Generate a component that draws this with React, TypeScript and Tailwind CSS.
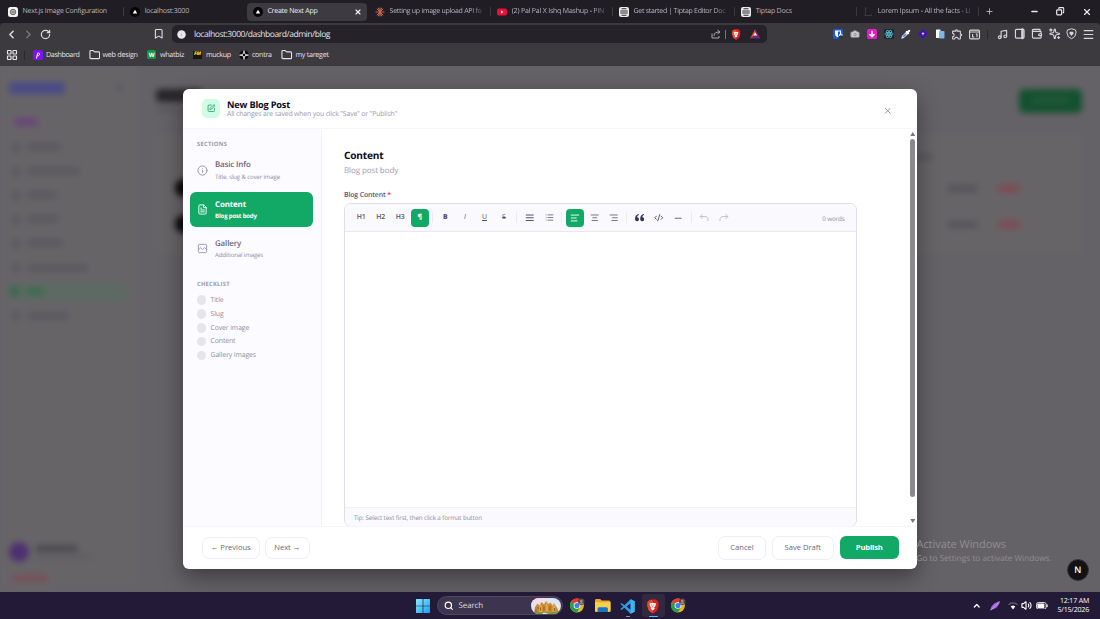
// src/App.tsx

import type { ReactNode } from 'react';
import {
  Bookmark,
  Camera,
  ChevronLeft,
  ChevronRight,
  ChevronUp,
  CodeXml,
  Copy,
  FileText,
  Folder,
  Info,
  LayoutGrid,
  List,
  Menu,
  Minus,
  Music,
  PanelRight,
  Plus,
  RotateCw,
  Search,
  Sparkles,
  SquarePen,
  TextAlignCenter,
  TextAlignEnd,
  TextAlignJustify,
  TextAlignStart,
  Volume2,
  Wallet,
  X
} from 'lucide-react';
import { MdOutlineExtension } from 'react-icons/md';

/* ---------- small drawings ---------- */

const NextMark = () => (
  <svg viewBox="0 0 20 20" className="h-[10px] w-[10px]">
    <circle cx="10" cy="10" r="10" fill="#050505" />
    <path d="M10 5.500 14.500 13h-9z" fill="#fff" />
  </svg>
);

const DocsMark = () => (
  <svg viewBox="0 0 20 20" className="h-[10px] w-[10px]">
    <rect width="20" height="20" rx="4" fill="#ececec" />
    <path d="M5 3.500h10M2.500 8h15M2.500 12h15M5 16.500h10" stroke="#2c2c2c" strokeWidth="2" />
  </svg>
);

const GlobeMark = () => (
  <svg viewBox="0 0 20 20" className="h-[10px] w-[10px]">
    <rect width="20" height="20" rx="5" fill="#f4f4f4" />
    <circle cx="10" cy="10" r="5.500" fill="#b9b9b9" stroke="#6c6c6c" strokeWidth="2" />
    <path d="M7 8.500h6M7 11.500h6" stroke="#666" strokeWidth="1.200" />
  </svg>
);

const BurstMark = () => (
  <svg viewBox="0 0 20 20" className="h-[10px] w-[10px]">
    <path
      d="M10 1v18M1 10h18M3.600 3.600l12.800 12.800M16.400 3.600 3.600 16.400M6.500 1.700l7 16.600M13.500 1.700l-7 16.600"
      stroke="#c9664b"
      strokeWidth="2"
    />
  </svg>
);

const VideoMark = () => (
  <svg viewBox="0 0 20 20" className="h-[10px] w-[10px]">
    <rect y="3" width="20" height="14" rx="4" fill="#ee0f38" />
    <path d="m8 7 5 3-5 3z" fill="#fff" />
  </svg>
);

const LoremMark = () => (
  <svg viewBox="0 0 20 20" className="h-[10px] w-[10px]">
    <path d="M3 2h5M5 2v15M3 17h14v-3" stroke="#45424a" strokeWidth="1.500" fill="none" />
  </svg>
);

const BraveMark = ({ className }: { className: string }) => (
  <svg viewBox="0 0 20 22" className={className}>
    <path d="M5.500 1h9L17 3.500l1.500 1.500-.7 2 .7 2.500L16 17l-6 4.500L4 17 1.500 9.500 2.200 7l-.7-2L3 3.500z" fill="#f4472c" />
    <path d="M10 1h4.500L17 3.500l1.500 1.500-.7 2 .7 2.500L16 17l-6 4.500z" fill="#e21f20" />
    <path d="M5 6.500 10 5.500l5 1-1.500 4.500-1.500 1.500 1 2-3 2.500-3-2.500 1-2L6.500 11z" fill="#fff" />
    <path d="m7.500 8.500 1.500.5M12.500 8.500 11 9M10 9.500v3" stroke="#e8402b" strokeWidth="1.200" />
  </svg>
);

const ChromeMark = () => (
  <svg viewBox="0 0 28 28" className="h-[15px] w-[15px]">
    <circle cx="13" cy="14" r="13" fill="#e3b822" />
    <path d="M13 14 1.700 7.500A13 13 0 0 1 24.300 7.500H13z" fill="#df3b30" />
    <path d="M13 14 1.700 7.500A13 13 0 0 0 13 27l5.600-9.700z" fill="#2b9c4c" />
    <circle cx="13" cy="14" r="6.200" fill="#fff" />
    <circle cx="13" cy="14" r="4.800" fill="#3c83ef" />
    <circle cx="21" cy="7" r="6" fill="#5b4a48" />
    <circle cx="21" cy="5.500" r="2.300" fill="#b78d7c" />
    <path d="M17 11c1-4 7-4 8 0z" fill="#8a8f9e" />
  </svg>
);

const ExplorerMark = () => (
  <svg viewBox="0 0 30 26" className="h-[13.500px] w-[15.500px]">
    <path d="M0 2.500Q0 0 2.500 0H10l3 3h14q3 0 3 3v17q0 3-3 3H3q-3 0-3-3z" fill="#e9a52a" />
    <path d="M0 6h30v15q0 3-3 3H3q-3 0-3-3z" fill="#fbd04e" />
    <path d="M5 26v-7q0-3 3-3h14q3 0 3 3v7z" fill="#1476c5" />
  </svg>
);

const VsCodeMark = () => (
  <svg viewBox="0 0 24 24" className="h-[15px] w-[15px]">
    <path
      d="M17 .5 23.500 3.500v17L17 23.500 7 14l-4.500 3.500L.5 16.300 5 12 .5 7.700l2-1.200L7 10zM17 7l-6.500 5 6.500 5z"
      fill="#2b9be8"
      fillRule="evenodd"
    />
    <path d="m17 .5 6.500 3v17l-6.500 3z" fill="#41b2f5" />
  </svg>
);

const WindowsMark = () => (
  <svg viewBox="0 0 28 28" className="h-[14px] w-[14px]">
    <defs>
      <linearGradient id="win" x1="0" y1="0" x2="1" y2="1">
        <stop offset="0" stopColor="#8be9ff" />
        <stop offset="1" stopColor="#16a0f0" />
      </linearGradient>
    </defs>
    <path
      d="M0 1q0-1 1-1h12.300v13.300H0zM14.700 0H27q1 0 1 1v12.300H14.700zM0 14.700h13.300V28H1q-1 0-1-1zM14.700 14.700H28V27q0 1-1 1H14.700z"
      fill="url(#win)"
    />
  </svg>
);

const CastleArt = () => (
  <svg viewBox="0 0 60 32" className="h-[16px] w-[30px] rounded-full">
    <rect width="60" height="32" fill="#dbe6f3" />
    <path d="M0 0h34l-8 9-26 4z" fill="#f4dcea" />
    <path d="M6 30 8 18l5-7 4 4 4-7 5 5 4-7 5 6 4-3 4 6 4-3 3 5 3 4 2 9z" fill="#c98a35" />
    <path d="m16 17 3-6 3 5v12h-6zM29 15l2-8 3 8v12h-5zM43 14l3-4 3 6v12h-6z" fill="#e3a443" />
    <path d="M10 22v5M14 18v4M19 19v6M26 17v8M38 16v9M47 20v6" stroke="#9a5a2c" strokeWidth="2" />
    <path d="M3 32c4-7 9-5 14-3s10-3 16 0 10-3 15-1 8-4 10-4v8z" fill="#6a9c3d" />
    <path d="M22 32c3-4 8-3 12 0zM50 8l8 5v9l-6-3z" fill="#e4e9ee" />
  </svg>
);

const GalleryIcon = ({ className }: { className?: string }) => (
  <svg viewBox="0 0 24 24" className={className} fill="none" stroke="currentColor" strokeWidth="1.900" strokeLinejoin="round">
    <rect x="3" y="3" width="18" height="18" rx="2" />
    <path d="m3 15 5-4.500 4 4 4.500-4.500L21 14.500M8 7h.5" />
  </svg>
);

/* ---------- browser ---------- */

interface TabItem {
  title: string;
  icon: ReactNode;
  text: string;
  active?: boolean;
  noLine?: boolean;
}

const FADE = '[mask-image:linear-gradient(to_right,black_85%,transparent_104%)]';

const TABS: TabItem[] = [
  { title: 'Next.js Image Configuration', icon: <GlobeMark />, text: 'tracking-[-0.230px]' },
  { title: 'localhost:3000', icon: <NextMark />, text: 'tracking-[-0.210px]', noLine: true },
  { title: 'Create Next App', icon: <NextMark />, text: 'tracking-[-0.220px]', active: true, noLine: true },
  { title: 'Setting up image upload API fo', icon: <BurstMark />, text: `ml-[1px] tracking-[-0.270px] ${FADE}` },
  { title: '(2) Pal Pal X Ishq Mashup - PIN', icon: <VideoMark />, text: `ml-[1px] tracking-[-0.200px] ${FADE}` },
  { title: 'Get started | Tiptap Editor Doc', icon: <DocsMark />, text: `tracking-[-0.280px] ${FADE}` },
  { title: 'Tiptap Docs', icon: <DocsMark />, text: 'tracking-[-0.200px]' },
  { title: 'Lorem Ipsum - All the facts - Li', icon: <LoremMark />, text: `tracking-[-0.180px] ${FADE}` }
];

const TabStrip = () => (
  <div className="flex h-[23px] items-center bg-[#201d25] pl-[2px]">
    {TABS.map((tab) => (
      <div key={tab.title} className="flex h-full w-[122.200px] shrink-0 items-center">
        <div
          className={`flex h-[18px] w-[120px] items-center rounded-[4px] ${
            tab.active ? 'ml-[0.500px] bg-[#3d3a41] pl-[6px] text-[#f2f0f4]' : 'pl-[6px] text-[#b9b6bd]'
          }`}
        >
          <span className="w-[14px] shrink-0">{tab.icon}</span>
          <span
            className={`mt-[1.500px] ml-[0.500px] w-[95px] shrink-0 text-[7px] leading-[10px] font-medium whitespace-nowrap ${tab.text}`}
          >
            {tab.title}
          </span>
          {tab.active && <X className="-ml-[8px] h-[8px] w-[8px] shrink-0" strokeWidth={3.5} />}
        </div>
        {!tab.noLine && <div className="ml-[1px] h-[9px] w-px bg-[#3b3840]" />}
      </div>
    ))}
    <Plus className="ml-[5px] h-[9px] w-[9px] text-[#b9b6bd]" strokeWidth={2.4} />
    <div className="ml-auto flex items-center text-[#eceaee]">
      <Minus className="mr-[17.500px] h-[9px] w-[9px]" strokeWidth={3.4} />
      <Copy className="mr-[17.500px] h-[8.500px] w-[8.500px] -scale-x-100" strokeWidth={3.4} />
      <X className="mr-[8px] h-[10px] w-[10px]" strokeWidth={2.8} />
    </div>
  </div>
);

const Cell = ({ children }: { children: ReactNode }) => (
  <div className="flex h-[12px] w-[17.100px] items-center justify-center">{children}</div>
);

const Extensions = () => (
  <div className="ml-auto flex items-center text-[#d8d5dc]">
    <Cell>
      <svg viewBox="0 0 20 20" className="h-[10px] w-[10px]">
        <rect width="20" height="20" rx="3" fill="#175ddc" />
        <path d="M4 3h12v7c0 4-4 6-6 7-2-1-6-3-6-7z" fill="#fff" />
        <path d="M10 5h4v5c0 2-2 3.500-4 4.500z" fill="#175ddc" />
        <path d="M11 13h9v7h-9z" fill="#33363f" />
        <path d="M13 14v-2a2.500 2.500 0 0 1 5 0v2" stroke="#fff" strokeWidth="1.500" fill="none" />
      </svg>
    </Cell>
    <Cell>
      <Camera className="h-[10px] w-[10px] text-[#8d8b91]" fill="#cfcdd1" strokeWidth={2} />
    </Cell>
    <Cell>
      <svg viewBox="0 0 20 20" className="h-[10px] w-[10px]">
        <rect width="20" height="20" rx="3" fill="#e31bc0" />
        <path d="M10 3.500v12M5 10.500l5 5 5-5" stroke="#fff" strokeWidth="3" fill="none" />
      </svg>
    </Cell>
    <Cell>
      <svg viewBox="0 0 20 20" className="h-[10px] w-[10px]">
        <rect width="20" height="20" rx="2" fill="#20232a" />
        <g fill="none" stroke="#55bfd6" strokeWidth="1.600">
          <ellipse cx="10" cy="10" rx="8.500" ry="3.300" />
          <ellipse cx="10" cy="10" rx="8.500" ry="3.300" transform="rotate(60 10 10)" />
          <ellipse cx="10" cy="10" rx="8.500" ry="3.300" transform="rotate(120 10 10)" />
        </g>
        <circle cx="10" cy="10" r="1.800" fill="#55bfd6" />
      </svg>
    </Cell>
    <Cell>
      <svg viewBox="0 0 20 20" className="h-[10px] w-[10px]">
        <path d="m1.500 18.500 1.500-4.500 8-8 3 3-8 8z" fill="#cfe0fb" stroke="#fff" strokeWidth="1.500" />
        <path d="m4.500 15.500 5-5" stroke="#3d79e8" strokeWidth="2.500" />
        <path d="m11.500 5.500 3 3M13.500 6.500l3-3" stroke="#fff" strokeWidth="4" strokeLinecap="round" />
      </svg>
    </Cell>
    <Cell>
      <svg viewBox="0 0 20 20" className="h-[10px] w-[10px]">
        <path d="m10 .5 9.500 9.500-9.500 9.500L.5 10z" fill="#3f10b5" />
        <path d="M10 6.500v6M7.500 9h5" stroke="#d9d0ff" strokeWidth="1.800" />
      </svg>
    </Cell>
    <Cell>
      <svg viewBox="0 0 20 20" className="h-[10px] w-[10px]">
        <rect x="2" y="1" width="9" height="17" rx="1" fill="#fff" />
        <rect x="8" y="4" width="11" height="15" rx="1.500" fill="#7db2f7" />
      </svg>
    </Cell>
    <Cell>
      <MdOutlineExtension className="h-[12.500px] w-[12.500px]" />
    </Cell>
    <Cell>
      <svg viewBox="0 0 20 20" className="h-[11px] w-[11px]" fill="none" stroke="currentColor" strokeWidth="2">
        <rect x="1" y="2" width="18" height="16" rx="2" />
        <path d="M1 5.500h18M6.500 9v5.500h3M12.500 9h2v6" />
      </svg>
    </Cell>
    <div className="mr-[6px] ml-[4.500px] h-[9px] w-px bg-[#29262d]" />
    <Cell>
      <Music className="h-[11px] w-[11px]" strokeWidth={2.5} />
    </Cell>
    <Cell>
      <PanelRight className="h-[11.500px] w-[11.500px] [&>path]:stroke-[5] [&>path]:translate-x-[2.500px]" strokeWidth={2.4} />
    </Cell>
    <Cell>
      <Wallet className="h-[11.500px] w-[11.500px]" strokeWidth={2.4} />
    </Cell>
    <Cell>
      <Sparkles className="h-[11.500px] w-[11.500px] -scale-y-100" strokeWidth={2.4} />
    </Cell>
    <Cell>
      <svg viewBox="0 0 20 20" className="h-[11.500px] w-[11px]" fill="none" stroke="currentColor" strokeWidth="1.800">
        <path d="M10 1 3 3 1.500 7 4 15l6 4 6-4 2.500-8L17 3z" />
        <path d="M10 14 6 9l1-2.500h6l1 2.500z" fill="currentColor" stroke="none" />
      </svg>
    </Cell>
    <Cell>
      <Menu className="h-[13px] w-[13px]" strokeWidth={2.2} />
    </Cell>
  </div>
);

const AddressBar = () => (
  <div className="flex h-[22px] items-center pr-[3px] pl-[5px] text-[#dedbe1]">
    <ChevronLeft className="h-[13px] w-[13px]" strokeWidth={2.8} />
    <ChevronRight className="ml-[4px] h-[13px] w-[13px] text-[#7b7880]" strokeWidth={2.4} />
    <RotateCw className="ml-[4.500px] h-[11px] w-[11px]" strokeWidth={2.7} />
    <Bookmark className="ml-[102px] h-[11.500px] w-[11.500px]" strokeWidth={2.3} />
    <div className="ml-[7.500px] flex h-[18px] w-[595px] items-center rounded-[5px] bg-[#252229] pl-[5px]">
      <svg viewBox="0 0 20 20" className="h-[9px] w-[9px]">
        <circle cx="10" cy="10" r="9.500" fill="#e9e7ec" />
        <path d="M10 6v1.500M10 9v5" stroke="#b5b2ba" strokeWidth="2" />
      </svg>
      <span className="mt-[1.500px] ml-[8.500px] text-[8.500px] leading-[12px] tracking-[-0.450px] text-[#e4e1e7]">
        localhost:3000/dashboard/admin/blog
      </span>
      <div className="ml-auto flex items-center pr-[6px]">
        <svg viewBox="0 0 20 20" className="h-[10px] w-[10px]" fill="none" stroke="#aaa7ae" strokeWidth="2">
          <path d="M2 9v9h14v-4M6 14c0-6 4-8 11-8M13 2l5 4-5 4" />
        </svg>
        <div className="mx-[4px] h-[9px] w-px bg-[#77747b]" />
        <BraveMark className="ml-px h-[11px] w-[10px]" />
        <svg viewBox="0 0 20 18" className="ml-[9px] h-[9.500px] w-[10.500px]">
          <path d="M10 0 0 18l10-6z" fill="#ff4724" />
          <path d="m10 0 10 18-10-6z" fill="#9e1f63" />
          <path d="M0 18h20l-10-6z" fill="#662d91" />
          <path d="m10 6 3.500 6.500h-7z" fill="#fff" />
        </svg>
      </div>
    </div>
    <Extensions />
  </div>
);

const BookmarkLink = ({ className, icon, label }: { className: string; icon: ReactNode; label: string }) => (
  <div className={`flex shrink-0 items-center whitespace-nowrap ${className}`}>
    <span className="flex w-[13px] shrink-0 items-center">{icon}</span>
    <span className="pt-[1.500px]">{label}</span>
  </div>
);

const BookmarksBar = () => (
  <div className="flex h-[21px] items-center pt-[0.500px] pb-[1.500px] pl-[6px] text-[7.200px] font-medium text-[#e6e3e9]">
    <LayoutGrid className="h-[12px] w-[12px]" strokeWidth={2.4} />
    <div className="mr-[8px] ml-[6px] h-[9px] w-px bg-[#29262d]" />
    <BookmarkLink
      className="w-[55.500px] tracking-[-0.400px]"
      label="Dashboard"
      icon={
        <svg viewBox="0 0 20 20" className="h-[10px] w-[10px]">
          <rect width="20" height="20" rx="3" fill="#7c14ee" />
          <path d="M7 17 9 7M8.500 6.500c6-3 6 6 .5 5" stroke="#fff" strokeWidth="2" fill="none" />
        </svg>
      }
    />
    <BookmarkLink
      className="w-[58.500px] gap-[1px] tracking-[-0.260px]"
      label="web design"
      icon={<Folder className="h-[11.500px] w-[11.500px]" strokeWidth={2.3} />}
    />
    <BookmarkLink
      className="w-[46px] tracking-[-0.310px]"
      label="whatbiz"
      icon={
        <span className="flex h-[9px] w-[9px] items-center justify-center rounded-[1.500px] bg-[#17944c] text-[6px] leading-none font-bold text-white">
          W
        </span>
      }
    />
    <BookmarkLink
      className="w-[46px] tracking-[-0.400px]"
      label="muckup"
      icon={
        <span className="flex h-[8px] w-[8.500px] items-center justify-center bg-[#17160f] text-[5px] leading-none font-extrabold tracking-[-0.500px] text-[#f2d32f] italic">
          FM
        </span>
      }
    />
    <BookmarkLink
      className="w-[42px] tracking-[-0.340px]"
      label="contra"
      icon={
        <svg viewBox="0 0 20 20" className="h-[10px] w-[10px]">
          <circle cx="10" cy="10" r="9.500" fill="#08080a" />
          <path d="M10 1v18M1 10h18" stroke="#fff" strokeWidth="2.500" />
          <path d="m10 4.500 5.500 5.500-5.500 5.500L4.500 10z" fill="#fff" />
          <circle cx="10" cy="10" r="2.800" fill="#08080a" />
        </svg>
      }
    />
    <BookmarkLink
      className="gap-[1.500px] tracking-[-0.300px]"
      label="my tareget"
      icon={<Folder className="h-[11.500px] w-[11.500px]" strokeWidth={2.3} />}
    />
  </div>
);

/* ---------- dimmed dashboard behind the dialog ---------- */

const NAV_BARS = ['w-[34px]', 'w-[53px]', 'w-[30px]', 'w-[32px]', 'w-[36px]', 'w-[61px]'];

const DashboardBackdrop = () => (
  <div className="flex h-full w-full bg-[#656267] blur-[3px]">
    <div className="flex w-[140px] flex-col border-r border-[#625f64] bg-[#676468] px-[9px] pt-[15.500px]">
      <div className="flex items-center justify-between pr-[8px]">
        <div className="h-[12px] w-[56px] rounded-[3px] bg-[#4b4b86]" />
        <div className="h-[5px] w-[5px] bg-[#55535c]" />
      </div>
      <div className="mt-[24.500px] ml-[5px] h-[8px] w-[24px] rounded-full bg-[#6a4478]" />
      <div className="mt-[9px] flex flex-col">
        {NAV_BARS.map((width) => (
          <div key={width} className="flex h-[24.100px] items-center gap-[7px] pl-[3px]">
            <div className="h-[7px] w-[8px] rounded-sm bg-[#57545c]" />
            <div className={`h-[6px] rounded-sm bg-[#59575c] ${width}`} />
          </div>
        ))}
        <div className="mt-[3.500px] flex h-[17px] items-center gap-[7px] rounded bg-[#5c6a62] pl-px">
          <div className="h-[9px] w-[9px] rounded-sm bg-[#376749]" />
          <div className="h-[7px] w-[18px] rounded-sm bg-[#3d6b4f]" />
        </div>
        <div className="mt-[3.500px] flex h-[24px] items-center gap-[7px] pl-[3px]">
          <div className="h-[7px] w-[8px] rounded-sm bg-[#57545c]" />
          <div className="h-[6px] w-[42px] rounded-sm bg-[#59575c]" />
        </div>
      </div>
      <div className="mt-auto mb-[31px] flex items-center gap-[6px]">
        <div className="h-[20px] w-[20px] rounded-full bg-[#4d3070]" />
        <div className="flex flex-col gap-[4px]">
          <div className="h-[5px] w-[43px] rounded-sm bg-[#454247]" />
          <div className="h-[3px] w-[58px] rounded-sm bg-[#5d5a5f]" />
        </div>
      </div>
      <div className="-mt-[18px] mb-[11px] ml-[3px] h-[6px] w-[36px] rounded-sm bg-[#794e54]" />
    </div>
    <div className="flex grow flex-col px-[16px] pt-[22.500px]">
      <div className="flex items-start justify-between pr-[2px]">
        <div className="flex flex-col gap-[6px]">
          <div className="h-[13px] w-[46px] rounded-sm bg-[#29262b]" />
          <div className="h-[4px] w-[70px] rounded-sm bg-[#5a575c]" />
        </div>
        <div className="flex h-[24px] w-[63px] items-center justify-center rounded-[5px] bg-[#13512f]">
          <div className="h-[5px] w-[38px] rounded-sm bg-[#255a3c]" />
        </div>
      </div>
      <div className="mt-[20px] flex h-[124px] flex-col border border-[#625f64] bg-[#676467] pr-[63px] pl-[18px]">
        <div className="mt-[20px] flex justify-end pr-[88px]">
          <div className="h-[6px] w-[42px] bg-[#59575d]" />
        </div>
        <div className="mt-[19.500px] flex items-center">
          <div className="h-[18px] w-[22px] rounded-full bg-[#0b090b]" />
          <div className="ml-auto h-[7px] w-[31px] rounded-sm bg-[#57545a]" />
          <div className="ml-[20px] h-[9px] w-[22px] rounded-sm bg-[#7b4e54]" />
        </div>
        <div className="mt-[18px] flex items-center">
          <div className="h-[18px] w-[22px] rounded-full bg-[#0b090b]" />
          <div className="ml-auto h-[7px] w-[31px] rounded-sm bg-[#57545a]" />
          <div className="ml-[20px] h-[9px] w-[22px] rounded-sm bg-[#7b4e54]" />
        </div>
      </div>
    </div>
  </div>
);

/* ---------- dialog ---------- */

const SECTIONS = [
  { title: 'Basic Info', hint: 'Title, slug & cover image', icon: Info, active: false },
  { title: 'Content', hint: 'Blog post body', icon: FileText, active: true },
  { title: 'Gallery', hint: 'Additional images', icon: GalleryIcon, active: false }
];

const CHECKLIST = ['Title', 'Slug', 'Cover image', 'Content', 'Gallery images'];

const DialogSidebar = () => (
  <div className="flex w-[139px] shrink-0 flex-col border-r border-[#f3f2f9] bg-[#fcfbff] px-[7px] pt-[11px]">
    <p className="pl-[7px] text-[5.800px] leading-[9px] font-bold tracking-[0.280px] text-[#9b99ad]">SECTIONS</p>
    <div className="mt-[4px] flex flex-col gap-[4.300px]">
      {SECTIONS.map(({ title, hint, icon: Icon, active }) => (
        <div
          key={title}
          className={`flex h-[35px] w-[123px] items-center rounded-[6px] pl-[7px] ${
            active ? 'bg-[#12a966] text-white' : 'text-[#686579]'
          }`}
        >
          <Icon className={`h-[11px] w-[11px] shrink-0 ${active ? '' : 'text-[#9593a6]'}`} />
          <div className="mt-[1.600px] ml-[7px] flex flex-col whitespace-nowrap">
            <span className={`text-[7.900px] leading-[11.500px] tracking-[-0.120px] ${active ? 'font-bold' : 'font-semibold'}`}>
              {title}
            </span>
            <span
              className={`text-[6.100px] leading-[10px] ${
                active ? 'font-bold tracking-[-0.200px]' : 'font-medium tracking-[-0.150px] text-[#8f8da1]'
              }`}
            >
              {hint}
            </span>
          </div>
        </div>
      ))}
    </div>
    <p className="mt-[13.500px] pl-[7px] text-[5.800px] leading-[9px] font-bold tracking-[0.230px] text-[#9b99ad]">CHECKLIST</p>
    <div className="mt-[4.500px] flex flex-col pl-[6.500px]">
      {CHECKLIST.map((label) => (
        <div key={label} className="flex h-[13.800px] items-center gap-[4.500px] text-[6.900px] tracking-[-0.110px] text-[#8f8da1]">
          <span className="h-[9.500px] w-[9.500px] rounded-full bg-[#e6e5eb]" />
          <span className="pt-[2px]">{label}</span>
        </div>
      ))}
    </div>
  </div>
);

const Tool = ({ active = false, children }: { active?: boolean; children: ReactNode }) => (
  <div className="flex w-[19.500px] items-center justify-center">
    <div
      className={`flex h-[18px] w-[18px] items-center justify-center rounded-[4px] ${
        active ? 'bg-[#12a966] text-white' : 'text-[#56536a]'
      }`}
    >
      {children}
    </div>
  </div>
);

const ToolDivider = () => (
  <div className="flex w-[6.200px] justify-center">
    <div className="h-[11px] w-px bg-[#ebe9f3]" />
  </div>
);

const HistoryArrow = ({ className }: { className: string }) => (
  <svg
    viewBox="0 0 24 24"
    className={`h-[10px] w-[10px] text-[#b5b3c1] ${className}`}
    fill="none"
    stroke="currentColor"
    strokeWidth="2"
  >
    <path d="M8 3 3 8.500 8 14M3 8.500h11c5 0 7.500 3 7.500 7V19" />
  </svg>
);

const EditorToolbar = () => (
  <div className="flex h-[28px] items-center border-b border-[#e9e8f2] bg-[#faf9fe] pr-[11.500px] pl-[6.500px] text-[6.900px] font-semibold">
    <Tool>
      <span className="pt-[1.500px]">H1</span>
    </Tool>
    <Tool>
      <span className="pt-[1.500px]">H2</span>
    </Tool>
    <Tool>
      <span className="pt-[1.500px]">H3</span>
    </Tool>
    <Tool active>
      <span className="pt-px font-extrabold">¶</span>
    </Tool>
    <ToolDivider />
    <Tool>
      <span className="pt-[1.500px] font-extrabold">B</span>
    </Tool>
    <Tool>
      <span className="pt-[1.500px] font-medium italic">I</span>
    </Tool>
    <Tool>
      <span className="pt-[1.500px] font-normal underline">U</span>
    </Tool>
    <Tool>
      <span className="pt-[1.500px] font-medium line-through decoration-[0.500px]">S</span>
    </Tool>
    <ToolDivider />
    <Tool>
      <TextAlignJustify className="h-[9.500px] w-[9.500px]" strokeWidth={2.6} />
    </Tool>
    <Tool>
      <List className="h-[9px] w-[9px]" />
    </Tool>
    <ToolDivider />
    <Tool active>
      <TextAlignStart className="h-[10px] w-[10px]" strokeWidth={2.2} />
    </Tool>
    <Tool>
      <TextAlignCenter className="h-[9.500px] w-[9.500px]" />
    </Tool>
    <Tool>
      <TextAlignEnd className="h-[9.500px] w-[9.500px]" />
    </Tool>
    <ToolDivider />
    <Tool>
      <svg viewBox="0 0 20 16" className="h-[7.500px] w-[9.500px]" fill="#2f3650">
        <path d="M8 0C3 1 0 4.500 0 10v1.500A4.200 4.200 0 1 0 4.500 7C4.600 4.500 6 3 8 2.300zM19 0c-5 1-8 4.500-8 10v1.500A4.200 4.200 0 1 0 15.500 7c.1-2.500 1.500-4 3.500-4.700z" />
      </svg>
    </Tool>
    <Tool>
      <CodeXml className="h-[9.500px] w-[9.500px]" strokeWidth={2.4} />
    </Tool>
    <Tool>
      <Minus className="h-[10.500px] w-[10.500px]" />
    </Tool>
    <ToolDivider />
    <Tool>
      <HistoryArrow className="" />
    </Tool>
    <Tool>
      <HistoryArrow className="-scale-x-100" />
    </Tool>
    <span className="ml-auto pt-px text-[6.300px] font-normal tracking-[-0.150px] text-[#8f8da1]">0 words</span>
  </div>
);

const DialogContent = () => (
  <div className="flex min-w-0 grow overflow-hidden">
    <div className="flex grow flex-col pt-[19px] pl-[22px]">
      <h2 className="text-[10.100px] leading-[15px] font-bold tracking-[-0.180px] text-[#0c0a18]">Content</h2>
      <p className="mt-[1px] text-[8px] leading-[14px] tracking-[-0.100px] text-[#a09eb0]">Blog post body</p>
      <p className="mt-[13px] text-[6.900px] leading-[10px] font-semibold tracking-[-0.120px] text-[#56536a]">
        Blog Content <span className="text-[#ee3048]">*</span>
      </p>
      <div className="mt-[2.500px] flex h-[323.500px] w-[513px] shrink-0 flex-col overflow-hidden rounded-[7px] border border-[#dfdde9]">
        <EditorToolbar />
        <div className="grow bg-white" />
        <div className="flex h-[19px] items-center border-t border-[#f1f0f7] bg-[#faf9fe] pt-px pl-[9px] text-[6.300px] tracking-[-0.140px] text-[#8f8da1]">
          Tip: Select text first, then click a format button
        </div>
      </div>
    </div>
    <div className="flex w-[9px] flex-col items-center justify-between pt-[3px] pb-[3px]">
      <svg viewBox="0 0 10 8" className="h-[4px] w-[5.500px]">
        <path d="m5 0 5 8H0z" fill="#77757a" />
      </svg>
      <div className="mb-[19.500px] h-[358px] w-[5px] rounded-full bg-[#8b898d]" />
      <svg viewBox="0 0 10 8" className="h-[4px] w-[5.500px]">
        <path d="M0 0h10L5 8z" fill="#77757a" />
      </svg>
    </div>
  </div>
);

const NewPostDialog = () => (
  <div className="flex h-[480.500px] w-[734px] flex-col overflow-hidden rounded-[6px] bg-white shadow-[0_8px_22px_rgba(0,0,0,0.4)]">
    <div className="flex h-[40px] shrink-0 items-center border-b border-[#f6f5fa] pr-[24.500px] pl-[18.500px]">
      <div className="flex h-[18.500px] w-[18.500px] items-center justify-center rounded-[5px] bg-[#d0fbe4] text-[#2a9a68]">
        <SquarePen className="h-[8.500px] w-[8.500px]" strokeWidth={2.3} />
      </div>
      <div className="ml-[7px] flex flex-col pt-[2px]">
        <h1 className="text-[9.200px] leading-[11px] font-bold tracking-[-0.180px] text-[#0c0a18]">New Blog Post</h1>
        <p className="text-[6.900px] leading-[10.500px] tracking-[-0.160px] text-[#9a98ab]">
          All changes are saved when you click "Save" or "Publish"
        </p>
      </div>
      <X className="mt-[4px] ml-auto h-[9.500px] w-[9.500px] text-[#8f8ca3]" strokeWidth={2.4} />
    </div>

    <div className="flex min-h-0 grow">
      <DialogSidebar />
      <DialogContent />
    </div>

    {/* Footer actions */}
    <div className="flex h-[43.500px] shrink-0 items-center border-t border-[#f6f5fa] pr-[18.500px] pb-[0.500px] pl-[18.500px] text-[7.600px] tracking-[-0.020px] text-[#6c697d]">
      <button className="h-[22px] w-[58.500px] rounded-[7px] border border-[#eeedf5]">← Previous</button>
      <button className="ml-[4.500px] h-[22px] w-[45.500px] rounded-[7px] border border-[#eeedf5]">Next →</button>
      <button className="ml-auto h-[24.500px] w-[48px] rounded-[7px] border border-[#eeedf5]">Cancel</button>
      <button className="ml-[6px] h-[24.500px] w-[61.500px] rounded-[7px] border border-[#eeedf5]">Save Draft</button>
      <button className="ml-[6.500px] h-[23px] w-[58.500px] rounded-[6px] bg-[#12a966] font-bold tracking-[-0.150px] text-white">
        Publish
      </button>
    </div>
  </div>
);

/* ---------- taskbar ---------- */

const Taskbar = () => (
  <div className="flex h-[27px] items-center bg-[#231a38] pl-[416px] text-white">
    <WindowsMark />
    <div className="ml-[7px] flex h-[19px] w-[126px] items-center rounded-full border border-[#50465f] bg-[#3d3450] pr-px pl-[5.500px]">
      <Search className="h-[9.500px] w-[9.500px]" strokeWidth={3} />
      <span className="ml-[5.500px] text-[8px] tracking-[-0.120px] text-[#dedae6]">Search</span>
      <span className="ml-auto">
        <CastleArt />
      </span>
    </div>
    <div className="ml-[2px] flex">
      <div className="flex h-[23px] w-[25.200px] items-center justify-center">
        <ChromeMark />
      </div>
      <div className="flex h-[23px] w-[25.200px] items-center justify-center">
        <ExplorerMark />
      </div>
      <div className="flex h-[23px] w-[25.200px] flex-col items-center justify-end">
        <VsCodeMark />
        <div className="mt-[2px] h-[1.500px] w-[3.500px] rounded-full bg-[#9b95a7]" />
      </div>
      <div className="flex h-[23px] w-[25.200px] justify-center">
        <div className="flex w-[23px] flex-col items-center justify-end rounded-[3px] bg-[#32283f]">
          <BraveMark className="h-[15px] w-[13.500px]" />
          <div className="mt-[2px] h-[1.500px] w-[9px] rounded-full bg-[#4cc2ff]" />
        </div>
      </div>
      <div className="flex h-[23px] w-[25.200px] items-center justify-center">
        <ChromeMark />
      </div>
    </div>
    <div className="mr-[11px] ml-auto flex items-center">
      <ChevronUp className="h-[9.500px] w-[9.500px]" strokeWidth={3.4} />
      <svg viewBox="0 0 20 20" className="ml-[8.500px] h-[10px] w-[10px]">
        <path d="M0 20C2 9 9 3 20 0c-1 8-7 16-17 17z" fill="#a866d8" />
        <path d="M2 18C8 13 12 9 17 3" stroke="#e0bdf5" strokeWidth="1.200" fill="none" />
      </svg>
      <svg viewBox="0 0 20 16" className="mt-[1px] ml-[8px] h-[8px] w-[10px]">
        <path d="M1 5.500a13 13 0 0 1 18 0" stroke="#665d75" strokeWidth="2.400" fill="none" />
        <path d="M5.500 9a7 7 0 0 1 9 0L10 15z" fill="#fff" />
      </svg>
      <Volume2 className="ml-[3.500px] h-[11px] w-[11px]" strokeWidth={2.4} />
      <svg viewBox="0 0 26 16" className="ml-[4px] h-[7.500px] w-[12px]">
        <rect x="1" y="1" width="21" height="14" rx="4" fill="none" stroke="#fff" strokeWidth="1.800" />
        <rect x="3" y="3" width="15" height="10" rx="2" fill="#fff" />
        <path d="M24 5.500v5" stroke="#fff" strokeWidth="2.500" />
      </svg>
      <div className="ml-[9px] w-[32px] text-right text-[7px] leading-[9px] font-medium tracking-[-0.180px] whitespace-nowrap">
        <div>12:17 AM</div>
        <div>5/15/2026</div>
      </div>
    </div>
  </div>
);

const App = () => (
  <div className="flex h-[619px] w-[1100px] flex-col overflow-hidden bg-[#201d25] font-['Open_Sans','Noto_Sans',sans-serif] [text-rendering:geometricPrecision]">
    <TabStrip />
    <div className="rounded-t-[4px] bg-[#3c393f]">
      <AddressBar />
      <BookmarksBar />
    </div>

    <div className="relative h-[526px] shrink-0 overflow-hidden bg-[#656267]">
      <DashboardBackdrop />

      {/* Dialog overlay */}
      <div className="absolute inset-0 flex items-center justify-center">
        <NewPostDialog />
      </div>

      {/* Activation notice and dev badge float above the page */}
      <div className="absolute top-[472px] left-[916.500px] whitespace-nowrap text-[#8f8d91]">
        <p className="text-[11px] leading-[14px] tracking-[-0.050px]">Activate Windows</p>
        <p className="mt-[0.500px] text-[8.200px] leading-[12px] tracking-[0.030px]">Go to Settings to activate Windows.</p>
      </div>
      <div className="absolute top-[493px] left-[1067px] flex h-[21.500px] w-[21.500px] items-center justify-center rounded-full border border-[#39363b] bg-[#121113] text-[9px] leading-none font-semibold text-white">
        N
      </div>
    </div>

    <Taskbar />
  </div>
);

export default App;
